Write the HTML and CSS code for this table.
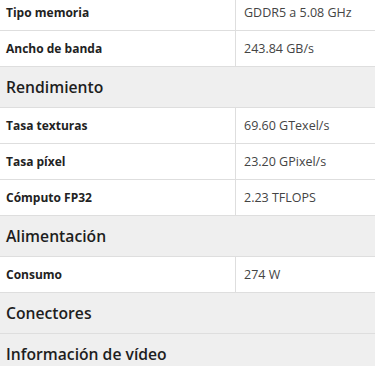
FILE: index.html
```html
<!DOCTYPE html>
<html lang="es">
<head>
<meta charset="utf-8">
<title>Especificaciones</title>
<link rel="stylesheet" href="styles.css">
</head>
<body>
<table class="specs">
  <tbody>
    <tr class="row"><th class="label">Tipo memoria</th><td class="value">GDDR5 a 5.08 GHz</td></tr>
    <tr class="row"><th class="label">Ancho de banda</th><td class="value">243.84 GB/s</td></tr>
    <tr class="section"><th colspan="2">Rendimiento</th></tr>
    <tr class="row"><th class="label">Tasa texturas</th><td class="value">69.60 GTexel/s</td></tr>
    <tr class="row"><th class="label">Tasa píxel</th><td class="value">23.20 GPixel/s</td></tr>
    <tr class="row"><th class="label">Cómputo FP32</th><td class="value">2.23 TFLOPS</td></tr>
    <tr class="section"><th colspan="2">Alimentación</th></tr>
    <tr class="row"><th class="label">Consumo</th><td class="value">274 W</td></tr>
    <tr class="section"><th colspan="2">Conectores</th></tr>
    <tr class="section"><th colspan="2">Información de vídeo</th></tr>
  </tbody>
</table>
</body>
</html>
```
FILE: styles.css
```css
html, body {
  margin: 0;
  padding: 0;
  background: #ffffff;
  overflow: hidden;
}
body {
  font-family: "Open Sans", "Noto Sans", sans-serif;
  color: #222;
}
.specs {
  width: 375px;
  border-collapse: collapse;
  margin-top: -5px;
  table-layout: fixed;
}
.specs th, .specs td {
  text-align: left;
  padding: 0;
}
.row th, .row td {
  height: 35px;
  border-bottom: 1px solid #dedede;
  vertical-align: middle;
}
.label {
  width: 229px;
  padding-left: 6px !important;
  font-size: 12px;
  font-weight: 700;
  color: #222;
  border-right: 1px solid #dedede;
}
.value {
  padding-left: 8px !important;
  font-size: 12.5px;
  font-weight: 400;
  color: #444;
}
.section th {
  height: 40px;
  background: #efefef;
  border-bottom: 1px solid #dedede;
  padding-left: 6px;
  font-size: 15.7px;
  font-weight: 600;
  color: #1e1e1e;
  vertical-align: middle;
}
```
